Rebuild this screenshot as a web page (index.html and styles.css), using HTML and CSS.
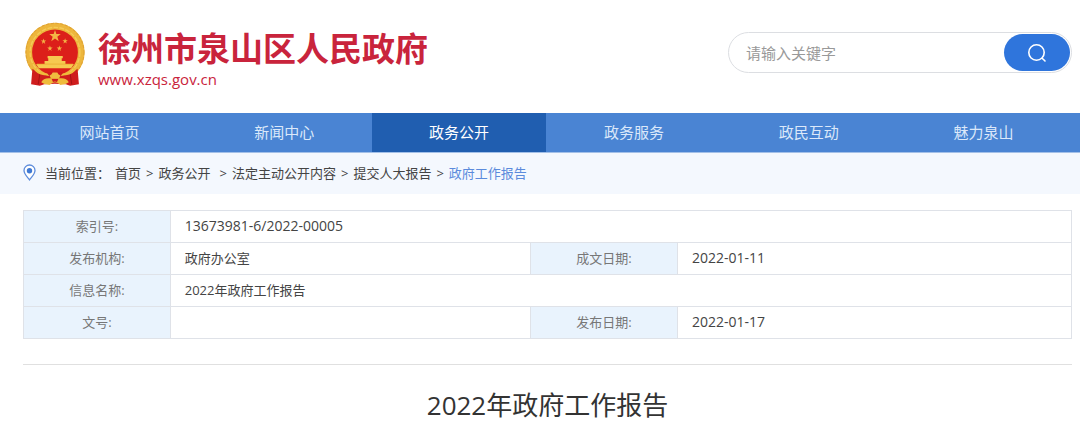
FILE: index.html
```
<!DOCTYPE html>
<html lang="zh-CN">
<head>
    <meta charset="UTF-8">
    <meta name="viewport" content="width=device-width, initial-scale=1.0">
    <title>2022年政府工作报告</title>
    <link rel="stylesheet" href="styles.css">
</head>
<body>

    <header class="header">
        <a class="brand" href="#">
            <svg class="emblem" viewBox="28 21 184 193" aria-hidden="true">
                <circle cx="120" cy="111" r="78" fill="#dc1f1a" stroke="#edb63c" stroke-width="20"/>
                <circle cx="120" cy="111" r="86" fill="none" stroke="#dfa235" stroke-width="3" stroke-dasharray="9 5"/>
                <circle cx="120" cy="111" r="74" fill="none" stroke="#f5cb58" stroke-width="4" stroke-dasharray="14 4"/>
                <g fill="#f3b545">
                    <path d="M120 45l4 12h13l-10 8 4 13-11-8-11 8 4-13-10-8h13z"/>
                    <path d="M86 70l2 6h6l-5 4 2 6-5-4-5 4 2-6-5-4h6z"/>
                    <path d="M150 69l2 6h6l-5 4 2 6-5-4-5 4 2-6-5-4h6z"/>
                    <path d="M105 91l2 6h6l-5 4 2 6-5-4-5 4 2-6-5-4h6z"/>
                    <path d="M133 91l2 6h6l-5 4 2 6-5-4-5 4 2-6-5-4h6z"/>
                </g>
                <path d="M98 122h45v7h-3v8h11v9h25l-8 12H72l-8-12h25v-9h11v-8h-2z" fill="#f6c950"/>
                <path d="M66 146h108" stroke="#e8a52b" stroke-width="2"/>
                <path d="M53 160l22 14 45 12 45-12 22-14 4 46-26 4-13-4q-32-4-64 0l-13 4-26-4z" fill="#cf1d1d"/>
                <path d="M75 176l-5 30M165 176l5 30" stroke="#a81416" stroke-width="3"/>
                <path d="M58 158q10 16 30 18t32 1q12 1 32-1t30-18" fill="none" stroke="#efbb3c" stroke-width="6"/>
                <path d="M95 170h50l-10 14h-30z" fill="#cf1d1d"/>
                <path d="M104 180l6-4 3-5h14l3 5 6 4-4 9h-24z" fill="#f0be3f"/>
                <path d="M79 200q6-12 22-12h38q16 0 22 12-10 8-25 8-7-8-16-8t-16 8q-15 0-25-8z" fill="#efbb3c"/>
                <path d="M110 190h20l-4 9q-6-3-12 0z" fill="#cf1d1d"/>
            </svg>
            <span class="brand-text">
                <span class="brand-name">徐州市泉山区人民政府</span>
                <span class="brand-url">www.xzqs.gov.cn</span>
            </span>
        </a>
        <form class="search">
            <input type="text" class="search-input" placeholder="请输入关键字" aria-label="请输入关键字">
            <button type="button" class="search-btn" aria-label="搜索">
                <svg width="20" height="20" viewBox="0 0 20 20" fill="none" stroke="#fff" stroke-width="1.6" stroke-linecap="round">
                    <circle cx="9.5" cy="9.5" r="7.7"/>
                    <path d="M15.2 15.2l2.8 2.8"/>
                </svg>
            </button>
        </form>
    </header>

    <nav class="nav">
        <a href="#">网站首页</a>
        <a href="#">新闻中心</a>
        <a href="#" class="active">政务公开</a>
        <a href="#">政务服务</a>
        <a href="#">政民互动</a>
        <a href="#">魅力泉山</a>
    </nav>

    <div class="crumbs">
        <svg class="pin" width="13" height="17" viewBox="0 0 13 17">
            <path d="M6.5 1a5.5 5.5 0 0 1 5.5 5.5C12 10 9 12.500 6.500 15.800 4 12.500 1 10 1 6.500A5.500 5.500 0 0 1 6.500 1z" fill="#fff" stroke="#5d8cdb" stroke-width="1.3"/>
            <circle cx="6.5" cy="6.7" r="2.7" fill="#3f79d3"/>
        </svg>
        <span class="crumbs-label">当前位置：</span>
        <a href="#">首页</a>
        <span class="sep">&gt;</span>
        <a href="#" class="wide">政务公开</a>
        <span class="sep">&gt;</span>
        <a href="#">法定主动公开内容</a>
        <span class="sep">&gt;</span>
        <a href="#">提交人大报告</a>
        <span class="sep">&gt;</span>
        <a href="#" class="current">政府工作报告</a>
    </div>

    <main class="content">
        <table class="info">
            <colgroup>
                <col class="col-label">
                <col class="col-value">
                <col class="col-label">
                <col>
            </colgroup>
            <tr>
                <th scope="row">索引号:</th>
                <td colspan="3" class="num">13673981-6/2022-00005</td>
            </tr>
            <tr>
                <th scope="row">发布机构:</th>
                <td>政府办公室</td>
                <th scope="row">成文日期:</th>
                <td class="num">2022-01-11</td>
            </tr>
            <tr>
                <th scope="row">信息名称:</th>
                <td colspan="3">2022年政府工作报告</td>
            </tr>
            <tr>
                <th scope="row">文号:</th>
                <td></td>
                <th scope="row">发布日期:</th>
                <td class="num">2022-01-17</td>
            </tr>
        </table>
        <h1 class="title">2022年政府工作报告</h1>
    </main>

</body>
</html>
```
FILE: styles.css
```
* {
    box-sizing: border-box;
}

body {
    margin: 0;
    font-family: "Open Sans", "Noto Sans CJK SC", sans-serif;
    font-size: 13px;
    color: #444;
    background: #fff;
}

a {
    color: inherit;
    text-decoration: none;
}

/* header */
.header {
    display: flex;
    justify-content: space-between;
    align-items: center;
    height: 113px;
    padding: 0 8px 8px 24px;
}

.brand {
    display: flex;
    align-items: center;
    gap: 12px;
    padding-top: 4px;
    color: #c9243c;
}

.emblem {
    width: 62px;
    height: 65px;
}

.brand-text {
    display: flex;
    flex-direction: column;
    padding-top: 8px;
}

.brand-name {
    font-size: 33px;
    line-height: 40px;
    font-weight: bold;
}

.brand-url {
    font-size: 15px;
    line-height: 20px;
}

.search {
    display: flex;
    width: 344px;
    height: 41px;
    padding: 1px;
    border: 1px solid #dcdee2;
    border-radius: 21px;
}

.search-input {
    flex: 1;
    min-width: 0;
    padding: 0 16px;
    border: none;
    outline: none;
    background: none;
    font: inherit;
    font-size: 15px;
}

.search-input::placeholder {
    color: #999;
}

.search-btn {
    display: flex;
    align-items: center;
    justify-content: center;
    width: 66px;
    padding: 0;
    border: none;
    border-radius: 19px;
    background: #2f75dc;
    cursor: pointer;
}

/* nav */
.nav {
    display: flex;
    padding: 0 9px 0 22px;
    background: #4a84d3;
    border-bottom: 1px solid #a3c0e8;
}

.nav a {
    flex: 1;
    text-align: center;
    font-size: 15px;
    line-height: 39px;
    color: #dbe8fa;
}

.nav a.active {
    background: #205eb0;
    color: #fff;
}

/* breadcrumb */
.crumbs {
    display: flex;
    align-items: center;
    gap: 5px;
    height: 41px;
    padding: 0 23px 2px;
    background: #f4f8fe;
}

.pin {
    margin-right: 4px;
}

.crumbs .wide {
    margin-right: 4px;
}

.crumbs .current {
    color: #5b8bdc;
}

/* info table */
.content {
    padding: 16px 8px 0 23px;
}

.info {
    width: 100%;
    table-layout: fixed;
    border-collapse: collapse;
}

.col-label {
    width: 14%;
}

.col-value {
    width: 34.4%;
}

.info th,
.info td {
    height: 32px;
    padding: 0 14px 2px;
    border: 1px solid #dfe2e8;
    line-height: 20px;
    text-align: left;
}

.info th {
    background: #e9f3fd;
    color: #777;
    font-weight: normal;
    text-align: center;
}

.info .num {
    font-size: 14px;
}

.title {
    margin: 25px 0 0;
    padding-top: 20px;
    border-top: 1px solid #e0e0e0;
    color: #333;
    font-size: 26px;
    line-height: 40px;
    font-weight: normal;
    text-align: center;
}
```
